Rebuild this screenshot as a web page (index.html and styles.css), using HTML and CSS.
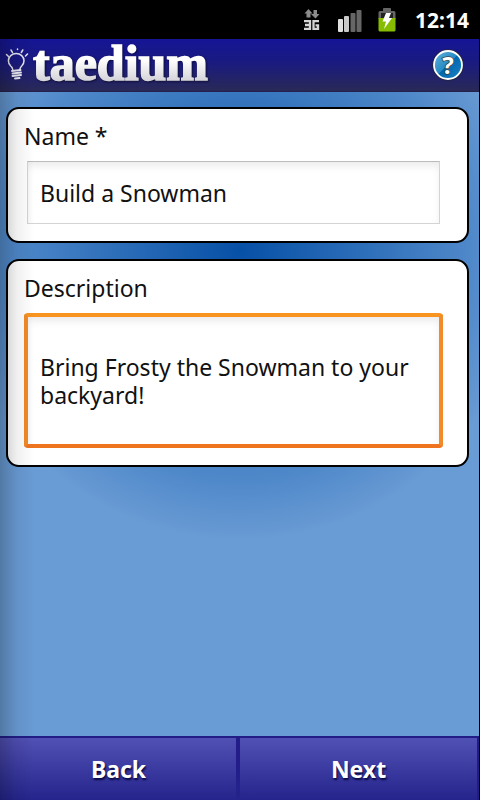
FILE: index.html
```html
<!DOCTYPE html>
<html lang="en">
<head>
<meta charset="utf-8">
<title>taedium</title>
<link rel="stylesheet" href="styles.css">
</head>
<body>
<div class="screen">
  <div class="status">
    <svg class="net" width="16" height="22" viewBox="0 0 16 22">
      <path fill="#8c8c8c" d="M4.500 0L8.500 4.500H6.500V8.500H2.500V4.500H.5zM9.500 1H13V5H15.500L11.500 9.500L7 5H9.500z"/>
      <path fill="none" stroke="#d4d4d4" stroke-width="2.300" d="M0 12.200H6V19.800H0M1 16H6M15 12.200H9.500V19.800H14V16.300H11.500"/>
    </svg>
    <svg class="signal" width="24" height="22" viewBox="0 0 24 22">
      <rect x="0" y="9" width="5" height="13" rx="1" fill="#e0e0e0"/>
      <rect x="6" y="6" width="5" height="16" rx="1" fill="#c9c9c9"/>
      <rect x="12.500" y="3" width="5" height="19" rx="1" fill="#666"/>
      <rect x="18.500" y="0" width="5" height="22" rx="1" fill="#666"/>
    </svg>
    <svg class="battery" width="18" height="24" viewBox="0 0 18 24">
      <path fill="#666" d="M5 3V1Q5 0 6 0H12Q13 0 13 1V3H16Q17.500 3 17.500 4.500V11H.5V4.500Q.5 3 2 3z"/>
      <path fill="#222" d="M3 5H15V11H3z"/>
      <path fill="#86bd00" d="M.5 10H17.500V22Q17.500 23.500 16 23.500H2Q.5 23.500 .5 22z"/>
      <path fill="#fff" d="M8 5H13L11 10H14L6 21L8 13.500H4.500z"/>
    </svg>
    <span class="clock">12:14</span>
  </div>
  <header class="bar">
    <svg class="logo" width="216" height="50" viewBox="0 0 216 50">
      <defs>
        <linearGradient id="silver" x1="0" y1="0" x2="0" y2="1">
          <stop offset=".45" stop-color="#fff"/>
          <stop offset=".85" stop-color="#d2d2d7"/>
        </linearGradient>
      </defs>
      <g fill="none" stroke="#e9e9f2" stroke-width="1.500" stroke-linecap="round">
        <path d="M12.700 29.500Q12.500 27.500 10.700 26A7.800 7.300 0 1 1 21.700 26Q20 27.500 19.700 30"/>
        <path d="M12 31L20.500 30M12.500 33.500L21 32.500M12.500 36L21 35M15 38.500L19.500 38" stroke-width="1.900"/>
        <path d="M6.500 14.500L8.500 16.500M11 10L12.500 12.500M17.500 9V9.500M22.800 10L21.300 12.500M27.500 14L25.500 16"/>
      </g>
      <text class="wordmark" x="33" y="39.500" textLength="175" lengthAdjust="spacingAndGlyphs" fill="url(#silver)">taedium</text>
    </svg>
    <svg class="help" width="32" height="34" viewBox="0 0 32 34">
      <defs>
        <linearGradient id="orb" x1="0" y1="0" x2="1" y2="1">
          <stop offset="0" stop-color="#65b4df"/>
          <stop offset=".48" stop-color="#278bc4"/>
          <stop offset=".5" stop-color="#0068b0"/>
          <stop offset="1" stop-color="#1c82c4"/>
        </linearGradient>
      </defs>
      <circle cx="16" cy="17" r="15.800" fill="#23233c"/>
      <circle cx="16" cy="17" r="14" fill="url(#orb)" stroke="#fff" stroke-width="1.800"/>
      <text class="mark" x="16" y="25.500" text-anchor="middle">?</text>
    </svg>
  </header>
  <main class="content">
    <section class="card name">
      <div class="label">Name *</div>
      <div class="field">Build a Snowman</div>
    </section>
    <section class="card description">
      <div class="label">Description</div>
      <div class="field focused">Bring Frosty the Snowman to your backyard!</div>
    </section>
  </main>
  <footer class="actions">
    <div class="action back">Back</div>
    <div class="action next">Next</div>
  </footer>
  <div class="shade"></div>
</div>
</body>
</html>
```
FILE: styles.css
```css
* { box-sizing: border-box; }
body { margin: 0; background: #000; font-family: "Noto Sans", sans-serif; }
.screen {
  position: relative;
  width: 480px;
  height: 800px;
  display: flex;
  flex-direction: column;
  overflow: hidden;
}
.status {
  height: 39px;
  padding: 0 11px 0 0;
  display: flex;
  align-items: center;
  justify-content: flex-end;
  color: #fff;
}
.net { margin: 1px 18px 0 0; }
.signal { margin: 3px 16px 0 0; }
.battery { margin: 1px 19px 0 0; }
.clock { font-size: 21px; font-weight: 700; line-height: 39px; padding-top: 2px; }
.bar {
  height: 53px;
  margin-right: 1px;
  padding-right: 15px;
  display: flex;
  align-items: center;
  justify-content: space-between;
  background: linear-gradient(#151596, #1a1a80 45%, #292957);
  border-bottom: 1px solid #25204e;
}
.logo { overflow: visible; margin-top: -1px; }
.help { overflow: visible; }
.wordmark {
  font: 700 50px "Liberation Serif", serif;
  stroke: url(#silver);
  stroke-width: 1.5px;
  filter: drop-shadow(1px 1px 1px rgba(0, 0, 20, .6));
}
.mark {
  font: 700 24px "Noto Sans", sans-serif;
  fill: #fff;
  stroke: #3a4046;
  stroke-width: 1.5px;
  paint-order: stroke;
}
.content {
  flex: 1;
  margin-right: 1px;
  padding: 15px 10px 0 6px;
  display: flex;
  flex-direction: column;
  gap: 16px;
  background: radial-gradient(circle 290px at 240px 158px, #0650a6 0, #5089ca 80%, #699bd4 100%);
}
.card {
  border: 2px solid #000;
  border-radius: 13px;
  background: #fff;
  padding: 10px 25px 0 16px;
  color: #111;
  font-size: 23px;
}
.name { height: 136px; }
.description { height: 208px; }
.label { height: 34px; line-height: 34px; }
.field {
  margin: 8px 2px 0 3px;
  height: 63px;
  padding: 0 12px;
  display: flex;
  align-items: center;
  border: 1px solid #d4d4d4;
  border-top-color: #bbb;
  box-shadow: inset 0 5px 10px -2px #e8e8e8;
  line-height: 28px;
}
.focused {
  margin: 8px -1px 0 0;
  height: 135px;
  border: 4px solid #f48a20;
  border-color: #f99420 #f18a28 #ee7420;
  border-radius: 4px;
}
.actions {
  height: 64px;
  margin-right: 1px;
  display: flex;
  border-top: 2px solid #211c86;
  background: linear-gradient(#5150b4, #24248c);
}
.action {
  height: 62px;
  display: flex;
  align-items: center;
  justify-content: center;
  color: #fff;
  font-size: 23px;
  font-weight: 700;
  text-shadow: 1px 2px 2px #080840;
}
.back { width: 240px; padding-left: 1px; border-right: 4px solid; border-image: linear-gradient(#221d89 40%, #24248c) 1; }
.next { flex: 1; border-right: 2px solid #211c86; }
.shade {
  position: absolute;
  left: 0;
  top: 39px;
  width: 34px;
  height: 761px;
  background: linear-gradient(90deg, rgba(0, 0, 0, .22), rgba(0, 0, 0, .06) 50%, transparent);
}
```
